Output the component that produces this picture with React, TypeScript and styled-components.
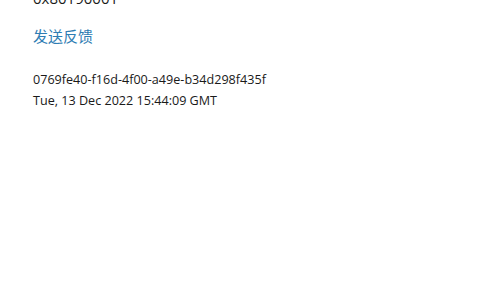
import { createGlobalStyle } from "styled-components";
import styled from "styled-components";

const GlobalStyle = createGlobalStyle`
  html, body {
    margin: 0;
    padding: 0;
    background: #ffffff;
    overflow: hidden;
  }
  body {
    font-family: "Open Sans", "Noto Sans", "Noto Sans CJK SC", sans-serif;
    color: #1a1a1a;
  }
`;

const Page = styled.div`
  width: 480px;
  height: 300px;
  overflow: hidden;
  background: #ffffff;
`;

const Content = styled.div`
  display: flex;
  flex-direction: column;
  padding-left: 33px;
  margin-top: -12px;
`;

const ErrorCode = styled.div`
  font-size: 15px;
  line-height: 20px;
  color: #1a1a1a;
`;

const FeedbackLink = styled.a`
  margin-top: 17px;
  font-family: "Noto Sans CJK SC", sans-serif;
  font-size: 15px;
  line-height: 22px;
  color: #2f7db3;
  text-decoration: none;
  cursor: pointer;
  align-self: flex-start;
`;

const Details = styled.div`
  margin-top: 23px;
  display: flex;
  flex-direction: column;
`;

const DetailLine = styled.div`
  font-size: 12.6px;
  line-height: 20.5px;
  color: #1a1a1a;
`;

export default function App() {
  return (
    <Page>
      <GlobalStyle />
      <Content>
        <ErrorCode>0x80190001</ErrorCode>
        <FeedbackLink>发送反馈</FeedbackLink>
        <Details>
          <DetailLine>0769fe40-f16d-4f00-a49e-b34d298f435f</DetailLine>
          <DetailLine>Tue, 13 Dec 2022 15:44:09 GMT</DetailLine>
        </Details>
      </Content>
    </Page>
  );
}
